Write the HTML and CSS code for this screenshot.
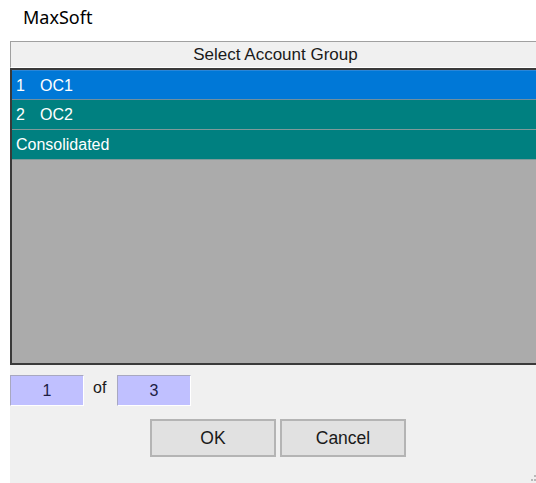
FILE: index.html
```html
<!DOCTYPE html>
<html>
<head>
<meta charset="utf-8">
<link rel="stylesheet" href="styles.css">
</head>
<body>
<div class="title">MaxSoft</div>
<div class="dialog">
  <div class="grid-head">Select Account Group</div>
  <div class="grid">
    <div class="row selected"><span class="num">1</span><span>OC1</span></div>
    <div class="row"><span class="num">2</span><span>OC2</span></div>
    <div class="row"><span>Consolidated</span></div>
  </div>
  <div class="pager">
    <div class="pagebox">1</div>
    <div class="of">of</div>
    <div class="pagebox">3</div>
  </div>
  <div class="buttons">
    <button class="btn">OK</button>
    <button class="btn">Cancel</button>
  </div>
  <div class="grip">
    <i></i><i></i><i></i>
  </div>
</div>
</body>
</html>
```
FILE: styles.css
```css
html, body {
  margin: 0;
  padding: 0;
  background: #ffffff;
  overflow: hidden;
  width: 536px;
  height: 483px;
}

.title {
  height: 41px;
  box-sizing: border-box;
  padding: 5px 0 0 23px;
  font-family: "Noto Sans", sans-serif;
  font-size: 18px;
  color: #000;
}

.dialog {
  position: relative;
  margin-left: 10px;
  width: 530px;
  height: 442px;
  background: #f0f0f0;
  font-family: "Liberation Sans", Arial, sans-serif;
  font-size: 16px;
  color: #000;
}

.grid-head {
  height: 27px;
  box-sizing: border-box;
  border-top: 1px solid #a0a0a0;
  border-left: 1px solid #a0a0a0;
  border-bottom: 1px solid #ffffff;
  background: #f0f0f0;
  text-align: center;
  font-size: 17px;
  line-height: 26px;
  color: #1a1a1a;
}

.grid {
  height: 297px;
  box-sizing: border-box;
  border: 2px solid #3a3a3a;
  border-right: none;
  background: #ababab;
}

.row {
  display: flex;
  height: 30px;
  box-sizing: border-box;
  border-bottom: 1px solid #7f9a9a;
  background: #008080;
  color: #ffffff;
  padding-left: 4px;
  line-height: 29px;
}

.row.selected {
  background: #0078d7;
  border-top: 1px solid #2a86d8;
  border-bottom-color: #6f8f9f;
}

.num {
  width: 24px;
}

.pager {
  display: flex;
  align-items: flex-start;
  margin-top: 10px;
  height: 31px;
}

.pagebox {
  width: 74px;
  height: 31px;
  box-sizing: border-box;
  background: #c0c0ff;
  border-top: 1px solid #a8a8c0;
  border-left: 1px solid #a8a8c0;
  border-bottom: 1px solid #ffffff;
  border-right: 1px solid #ffffff;
  text-align: center;
  line-height: 30px;
  color: #1c1c44;
}

.of {
  width: 33px;
  box-sizing: border-box;
  padding-left: 9px;
  line-height: 26px;
  color: #1a1a1a;
}

.buttons {
  display: flex;
  gap: 4px;
  margin: 13px 0 0 140px;
}

.btn {
  width: 126px;
  height: 38px;
  box-sizing: border-box;
  border: 2px solid #b4b4b4;
  background: #e1e1e1;
  font-family: "Liberation Sans", Arial, sans-serif;
  font-size: 17.5px;
  color: #1a1a1a;
  padding: 0;
}

.grip {
  position: absolute;
  right: 4px;
  bottom: 2px;
  width: 6px;
  height: 6px;
}

.grip i {
  position: absolute;
  width: 2px;
  height: 2px;
  background: #b8b8b8;
}

.grip i:nth-child(1) { right: 0; top: 0; }
.grip i:nth-child(2) { right: 0; bottom: 0; }
.grip i:nth-child(3) { right: 3px; bottom: 0; }
```
